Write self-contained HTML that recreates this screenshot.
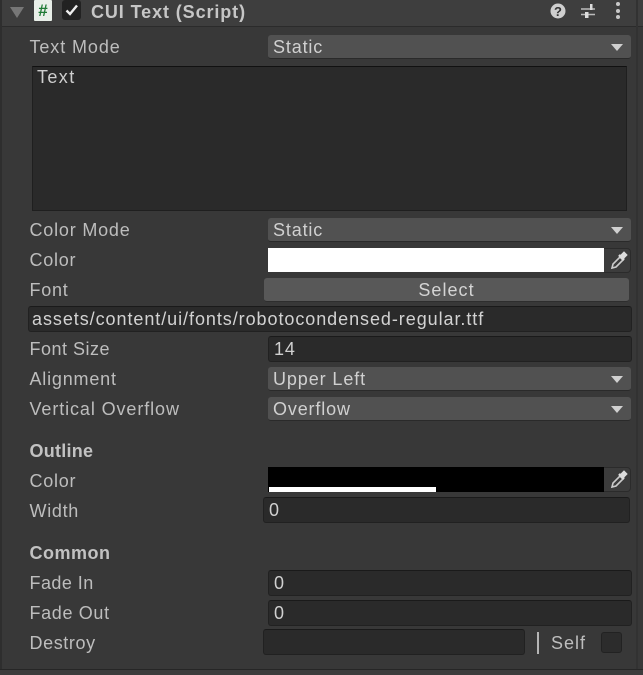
<!DOCTYPE html>
<html><head><meta charset="utf-8">
<style>
html,body{margin:0;padding:0;background:#383838}
body{width:643px;height:675px;background:#383838;position:relative;overflow:hidden;font-family:"Liberation Sans",sans-serif;color:#c4c4c4;font-size:18px}
#w{position:absolute;left:0;top:0;width:643px;height:675px;filter:blur(.35px)}
.a{position:absolute}
.l{position:absolute;left:29.5px;line-height:20px;white-space:nowrap;color:#bdbdbd;font-size:18px;letter-spacing:.75px}
.b{font-weight:bold}
.dd{position:absolute;left:268px;width:363px;height:24px;background:#515151;border-radius:3px;border-bottom:1px solid #2a2a2a;box-sizing:border-box;color:#d0d0d0;line-height:25px;padding-left:5px;white-space:nowrap;letter-spacing:.85px}
.dd:after{content:"";position:absolute;right:8px;top:9px;border-left:6px solid transparent;border-right:6px solid transparent;border-top:7px solid #d0d0d0}
.in{position:absolute;background:#2a2a2a;border-radius:3px;border:1px solid #212121;border-top-color:#1a1a1a;box-sizing:border-box;color:#d0d0d0;line-height:25px;padding-left:5px;white-space:nowrap;letter-spacing:.9px;height:26px}
.pk{position:absolute;left:604px;width:27px;height:25px;background:#3c3c3c;border-radius:0 4px 4px 0;border:1px solid #2b2b2b;border-left:0;box-sizing:border-box}
</style></head><body>
<div id="w">
<div class="a" style="left:0;top:0;width:643px;height:26px;background:#3e3e3e"></div>
<div class="a" style="left:0;top:26px;width:643px;height:1px;background:#2b2b2b"></div>
<div class="a" style="left:0;top:0;width:2px;height:675px;background:#2e2e2e"></div>
<div class="a" style="left:636px;top:0;width:2px;height:675px;background:#323232"></div>
<div class="a" style="left:0;top:669px;width:643px;height:1px;background:#262626"></div>
<div class="a" style="left:0;top:670px;width:643px;height:5px;background:#3c3c3c"></div>

<div class="a" style="left:10px;top:7px;border-left:7px solid transparent;border-right:7px solid transparent;border-top:11px solid #777"></div>
<div class="a" style="left:34px;top:0;width:18px;height:21px;background:#e9efe9;border-radius:1px"></div>
<div class="a b" style="left:34px;top:0;width:18px;height:21px;text-align:center;line-height:22px;color:#1f7a35;font-size:17px">#</div>
<div class="a" style="left:62px;top:0;width:19px;height:20px;background:#222;border-radius:3px"></div>
<svg class="a" style="left:62px;top:0" width="20" height="20"><path d="M4.5 10.5L8 14L15 5.5" fill="none" stroke="#eee" stroke-width="2.4"/></svg>
<div class="a b" style="left:91px;top:1px;line-height:22px;font-size:18px;color:#c6c6c6;letter-spacing:.9px;white-space:nowrap">CUI Text (Script)</div>

<svg class="a" style="left:548px;top:0" width="85" height="24">
<circle cx="10" cy="11" r="7.5" fill="#cfcfcf"/>
<text x="10" y="16" text-anchor="middle" font-family="Liberation Sans" font-weight="bold" font-size="13" fill="#333">?</text>
<path d="M33 9H47M33 14.5H47" stroke="#bbb" stroke-width="1.5"/>
<rect x="42" y="4" width="2.5" height="6" fill="#ddd"/><rect x="37" y="12" width="3.5" height="6" fill="#ddd"/>
<circle cx="70" cy="4" r="2" fill="#c8c8c8"/><circle cx="70" cy="11" r="2" fill="#c8c8c8"/><circle cx="70" cy="17" r="2" fill="#c8c8c8"/>
</svg>

<div class="l" style="top:37px;letter-spacing:.9px">Text Mode</div>
<div class="dd" style="top:35px">Static</div>

<div class="a" style="left:32px;top:66px;width:595px;height:145px;background:#2a2a2a;border:1px solid #1f1f1f;border-top-color:#111;box-sizing:border-box"></div>
<div class="a" style="left:37px;top:67px;line-height:20px;color:#cfcfcf;letter-spacing:1.4px">Text</div>

<div class="l" style="top:220px;letter-spacing:.8px">Color Mode</div>
<div class="dd" style="top:218px">Static</div>

<div class="l" style="top:250px">Color</div>
<div class="a" style="left:268px;top:248px;width:337px;height:24px;background:#fff"></div>
<div class="pk" style="top:248px"></div>
<svg class="a" style="left:609px;top:250px" width="20" height="20"><path d="M3 18L4 14L11 7L14 10L7 17Z" fill="none" stroke="#ccc" stroke-width="1.6"/><path d="M10 5L15 10M12 6L15 3L17 5L14 8" stroke="#ddd" stroke-width="2.4" fill="#ddd"/></svg>

<div class="l" style="top:280px;letter-spacing:.75px">Font</div>
<div class="a" style="left:264px;top:278px;width:365px;height:24px;background:#585858;border-radius:3px;border-bottom:1px solid #2e2e2e;box-sizing:border-box;text-align:center;line-height:25px;color:#d4d4d4;letter-spacing:1.05px">Select</div>

<div class="in" style="left:28px;top:306px;width:604px;color:#d2d2d2;padding-left:3px;letter-spacing:.94px">assets/content/ui/fonts/robotocondensed-regular.ttf</div>

<div class="l" style="top:339px;letter-spacing:.5px">Font Size</div>
<div class="in" style="left:268px;top:336px;width:364px">14</div>

<div class="l" style="top:369px;letter-spacing:.8px">Alignment</div>
<div class="dd" style="top:367px;letter-spacing:.9px">Upper Left</div>

<div class="l" style="top:399px;letter-spacing:.9px">Vertical Overflow</div>
<div class="dd" style="top:397px;letter-spacing:.85px">Overflow</div>

<div class="l b" style="top:441px;color:#c2c2c2;letter-spacing:.25px">Outline</div>

<div class="l" style="top:471px">Color</div>
<div class="a" style="left:268px;top:467px;width:337px;height:25px;background:#000"></div>
<div class="a" style="left:269px;top:487px;width:167px;height:5px;background:#fff"></div>
<div class="pk" style="top:467px"></div>
<svg class="a" style="left:609px;top:469px" width="20" height="20"><path d="M3 18L4 14L11 7L14 10L7 17Z" fill="none" stroke="#ccc" stroke-width="1.6"/><path d="M10 5L15 10M12 6L15 3L17 5L14 8" stroke="#ddd" stroke-width="2.4" fill="#ddd"/></svg>

<div class="l" style="top:501px;letter-spacing:.7px">Width</div>
<div class="in" style="left:263px;top:497px;width:367px">0</div>

<div class="l b" style="top:543px;color:#c2c2c2;letter-spacing:.5px">Common</div>

<div class="l" style="top:573px;letter-spacing:.45px">Fade In</div>
<div class="in" style="left:268px;top:570px;width:364px">0</div>

<div class="l" style="top:603px;letter-spacing:.65px">Fade Out</div>
<div class="in" style="left:268px;top:600px;width:364px">0</div>

<div class="l" style="top:633px;letter-spacing:.6px">Destroy</div>
<div class="in" style="left:263px;top:629px;width:262px"></div>
<div class="a" style="left:537px;top:632px;width:2px;height:22px;background:#b5b5b5"></div>
<div class="a" style="left:551px;top:633px;line-height:20px;color:#bdbdbd;letter-spacing:1px">Self</div>
<div class="a" style="left:601px;top:632px;width:21px;height:21px;background:#2c2c2c;border:1px solid #222;box-sizing:border-box;border-radius:3px"></div>
</div>
</body></html>
